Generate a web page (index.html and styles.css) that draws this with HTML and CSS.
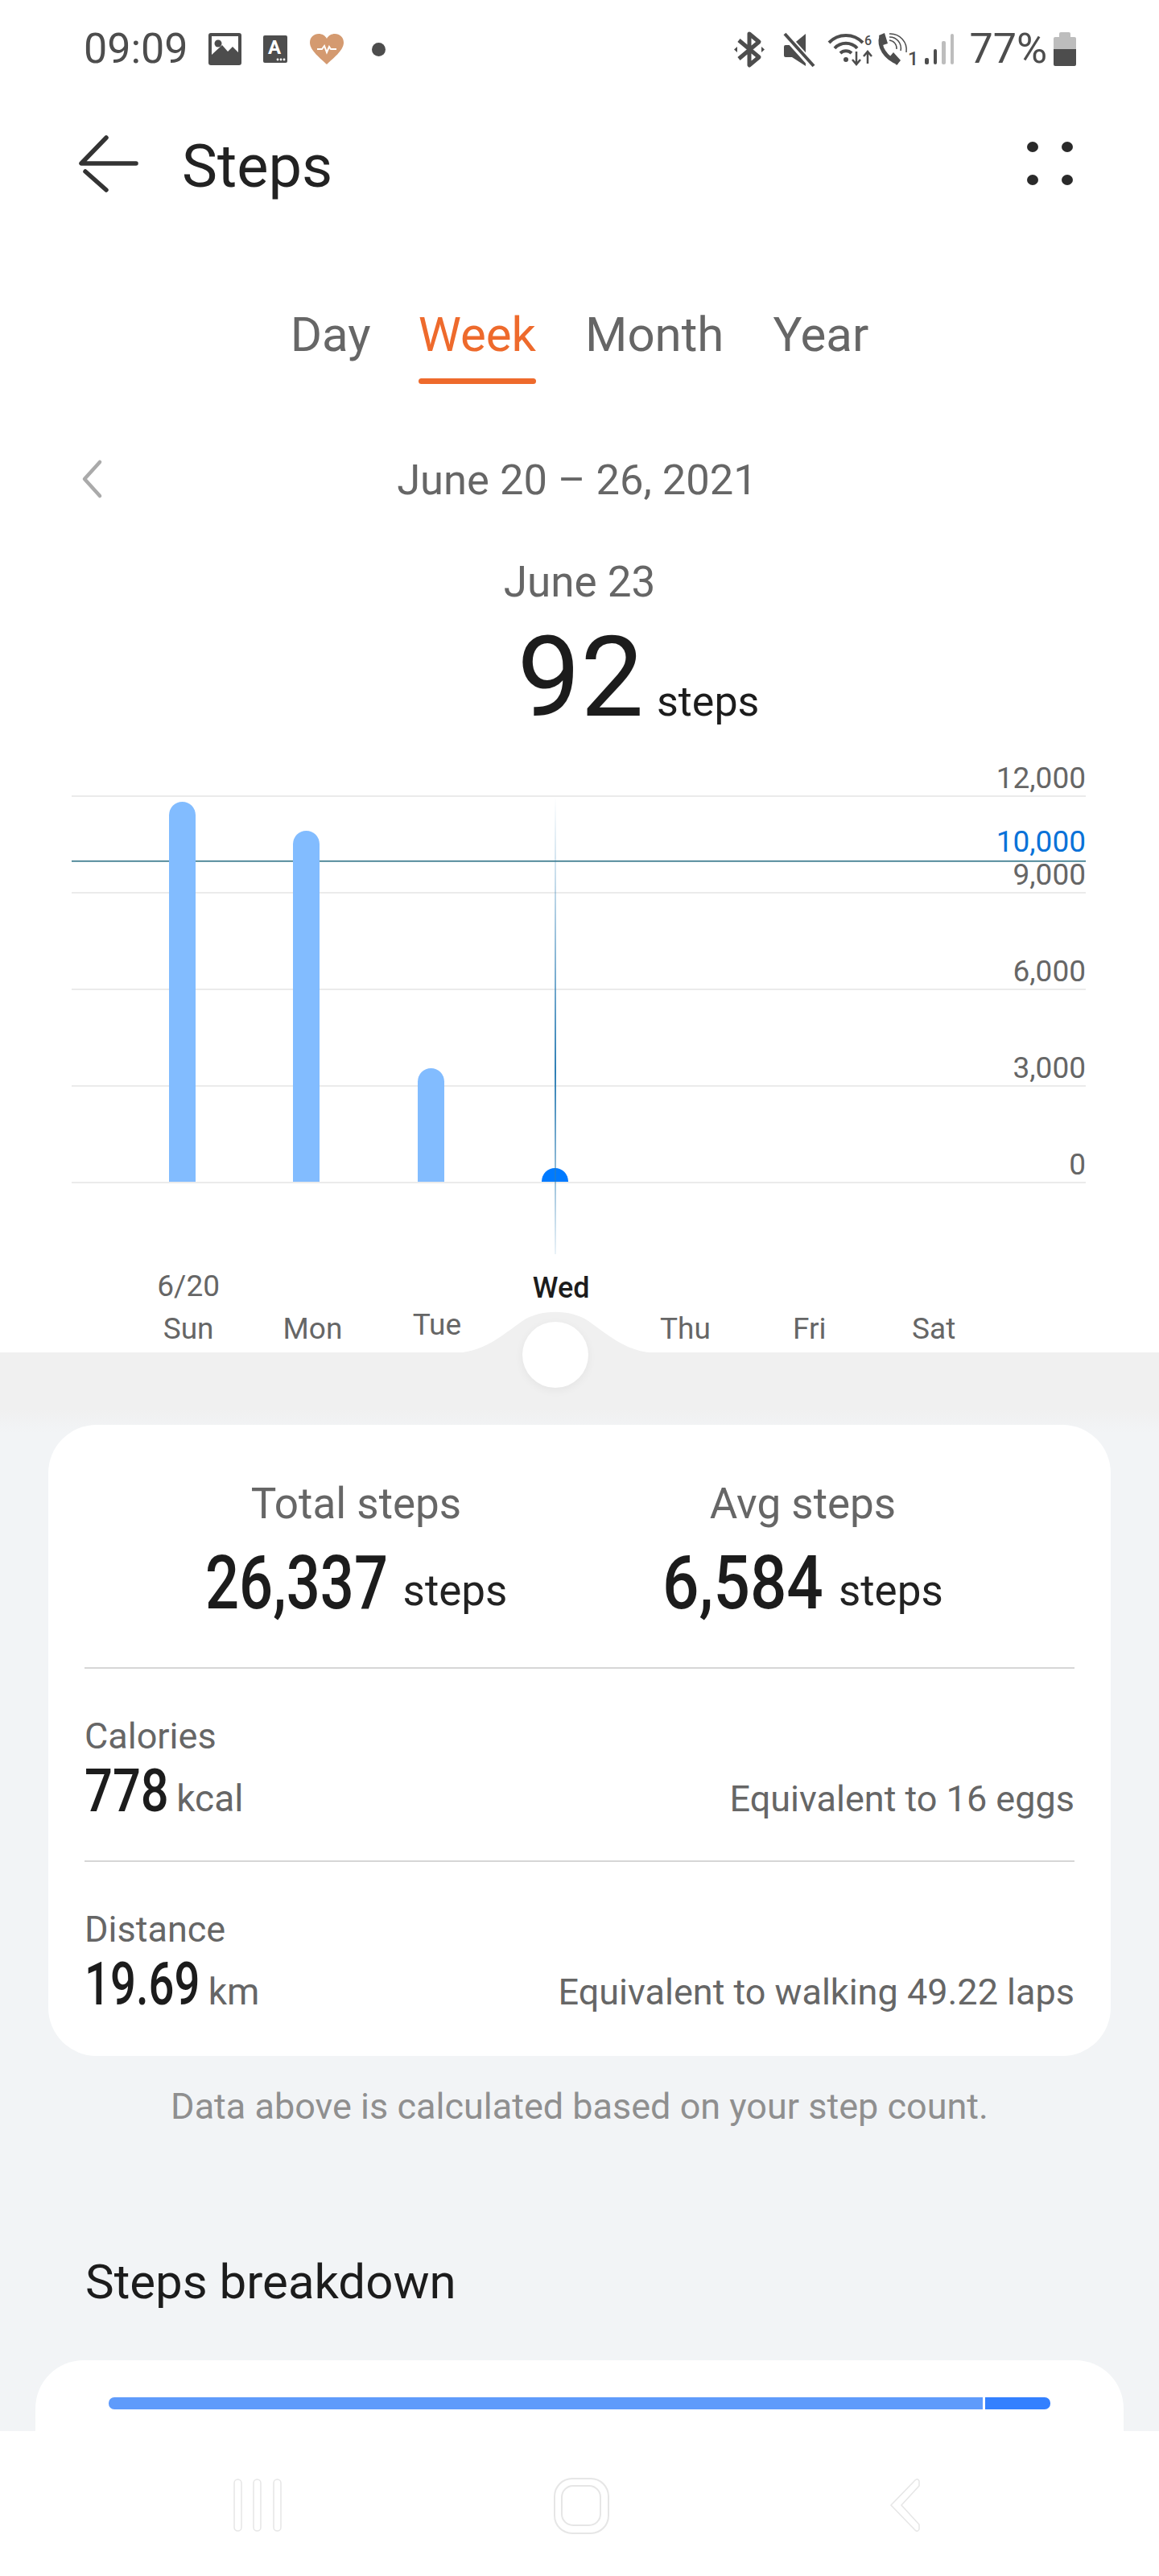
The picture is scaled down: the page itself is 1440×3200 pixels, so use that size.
FILE: index.html
```html
<!DOCTYPE html>
<html lang="en">
<head>
<meta charset="utf-8">
<title>Steps</title>
<link rel="stylesheet" href="styles.css">
</head>
<body>
<div class="phone">
  <div class="status">
    <div class="status-left">
      <span class="clock">09:09</span>
      <svg class="ico-img" width="41" height="40" viewBox="0 0 41 40"><rect width="41" height="40" rx="3" fill="#4d4d4d"/><path d="M4 4H37V24L30 17L24 23L17 15L4 27Z" fill="#fff"/><circle cx="12" cy="13" r="4.5" fill="#4d4d4d"/></svg>
      <svg class="ico-a" width="30" height="34" viewBox="0 0 30 34"><rect width="30" height="34" rx="2" fill="#4d4d4d"/><text x="14" y="23" class="ico-a-text">A</text><circle cx="18" cy="30" r="1.4" fill="#fff"/><circle cx="22" cy="30" r="1.4" fill="#fff"/><circle cx="26" cy="30" r="1.4" fill="#fff"/></svg>
      <svg class="ico-heart" width="42" height="38" viewBox="0 0 42 38"><path d="M21 38C14 31 0 21 0 11C0 4 5 0 11 0C15 0 19 2 21 6C23 2 27 0 31 0C37 0 42 4 42 11C42 21 28 31 21 38Z" fill="#d49a70"/><path d="M9 19H15L18 15L21 23L24 16L26 19H33" fill="none" stroke="#fff" stroke-width="2"/></svg>
      <span class="ico-dot"></span>
    </div>
    <div class="status-right">
      <svg class="ico-bt" width="38" height="43" viewBox="0 0 38 43"><path d="M6 10L31 31L19 41V2L31 12L6 33" fill="none" stroke="#4d4d4d" stroke-width="5" stroke-linejoin="round"/><path d="M0 21.500L4 18V25ZM38 21.500L34 18V25Z" fill="#4d4d4d"/></svg>
      <svg class="ico-mute" width="38" height="41" viewBox="0 0 38 41"><path d="M0 17Q0 15 2 15H10L27 1V41L10 30H2Q0 30 0 28Z" fill="#4d4d4d"/><path d="M1 2L37 42" stroke="#fff" stroke-width="9"/><path d="M1 1L37 41" stroke="#4d4d4d" stroke-width="4"/></svg>
      <svg class="ico-wifi" width="54" height="41" viewBox="0 0 54 41"><g fill="none" stroke="#4d4d4d" stroke-width="4"><path d="M1 12A29 29 0 0 1 43 12"/><path d="M8 19A19 19 0 0 1 36 19"/><path d="M15 25A10 10 0 0 1 29 25"/><path d="M35 23V38M30 33L35 39L40 33M49 38V24M44 29L49 23L54 29" stroke-width="2.500"/></g><circle cx="22" cy="33" r="3" fill="#4d4d4d"/><text x="45" y="15" class="ico-small">6</text></svg>
      <svg class="ico-call" width="48" height="41" viewBox="0 0 48 41"><path d="M5 4C1 17 10 31 26 37" fill="none" stroke="#4d4d4d" stroke-width="5"/><path d="M2 3L9 0L13 13L7 15ZM15 30L20 24L29 34L24 40Z" fill="#4d4d4d"/><g fill="none" stroke="#4d4d4d" stroke-width="1.500"><path d="M15 9A10 10 0 0 1 24 20"/><path d="M15 5A14 14 0 0 1 29 22"/><path d="M15 1A20 20 0 0 1 36 24"/></g><text x="38" y="40" class="ico-one">1</text></svg>
      <div class="signal"><i class="sig s1"></i><i class="sig s2"></i><i class="sig s3"></i><i class="sig s4"></i></div>
      <span class="batt-text">77%</span>
      <svg class="ico-batt" width="28" height="42" viewBox="0 0 28 42"><path d="M7 2Q7 0 9 0H19Q21 0 21 2V6H26Q28 6 28 8V22H0V8Q0 6 2 6H7Z" fill="#bdbdbd"/><path d="M0 21H28V40Q28 42 26 42H2Q0 42 0 40Z" fill="#4d4d4d"/></svg>
    </div>
  </div>

  <div class="appbar">
    <svg class="back" width="76" height="70" viewBox="0 0 76 70"><g fill="none" stroke="#333" stroke-width="5.500" stroke-linecap="round" stroke-linejoin="round"><path d="M35 3L4 35H72"/><path d="M9 45L35 68"/></g></svg>
    <h1 class="title">Steps</h1>
    <div class="more"><i></i><i></i><i></i><i></i></div>
  </div>

  <div class="tabs">
    <span class="tab tab-first">Day</span>
    <span class="tab active">Week</span>
    <span class="tab">Month</span>
    <span class="tab">Year</span>
  </div>

  <div class="range">
    <svg class="prev" width="26" height="48" viewBox="0 0 26 48"><path d="M23 3L4 24L23 45" fill="none" stroke="#aaa" stroke-width="4.500" stroke-linecap="round" stroke-linejoin="round"/></svg>
    <span>June 20 – 26, 2021</span>
  </div>
  <div class="day-label">June 23</div>
  <div class="day-value"><span class="big">92</span><span class="big-unit">steps</span></div>

  <div class="chart">
    <div class="row row-top"><span>12,000</span></div>
    <div class="row"><span>9,000</span></div>
    <div class="row"><span>6,000</span></div>
    <div class="row"><span>3,000</span></div>
    <div class="row"><span>0</span></div>
    <div class="goal"><span>10,000</span></div>
    <div class="bars">
      <i class="bar" style="height:472px"></i>
      <i class="bar" style="height:436px"></i>
      <i class="bar" style="height:141px"></i>
      <i class="bar now" style="height:17px"></i>
    </div>
    <div class="cursor"></div>
  </div>

  <div class="days">
    <div class="d"><span>6/20</span><span>Sun</span></div>
    <div class="d"><span>Mon</span></div>
    <div class="d d-tue"><span>Tue</span></div>
    <div class="d d-wed"><span>Wed</span></div>
    <div class="d"><span>Thu</span></div>
    <div class="d"><span>Fri</span></div>
    <div class="d"><span>Sat</span></div>
  </div>

  <div class="main">
    <svg class="hump" width="258" height="52" viewBox="0 0 258 52"><path d="M0 52C40 52 62 30 88 12C110 -3 148 -3 170 12C196 30 218 52 258 52Z" fill="#f0f0f0"/></svg>
    <div class="knob"></div>

    <div class="card">
      <div class="summary">
        <div class="sum-col">
          <div class="sum-label">Total steps</div>
          <div class="sum-value"><span class="num n-total">26,337</span><span class="sum-unit">steps</span></div>
        </div>
        <div class="sum-col">
          <div class="sum-label">Avg steps</div>
          <div class="sum-value"><span class="num n-avg">6,584</span><span class="sum-unit">steps</span></div>
        </div>
      </div>
      <div class="metric">
        <div class="metric-label">Calories</div>
        <div class="metric-line">
          <div class="metric-main"><span class="num num-sm n-cal">778</span><span class="metric-unit">kcal</span></div>
          <div class="metric-eq">Equivalent to 16 eggs</div>
        </div>
      </div>
      <div class="metric metric-last">
        <div class="metric-label">Distance</div>
        <div class="metric-line">
          <div class="metric-main"><span class="num num-sm n-dist">19.69</span><span class="metric-unit">km</span></div>
          <div class="metric-eq">Equivalent to walking 49.22 laps</div>
        </div>
      </div>
    </div>

    <p class="note">Data above is calculated based on your step count.</p>
    <h2 class="section">Steps breakdown</h2>

    <div class="card-2">
      <div class="split"><i class="seg-a"></i><i class="seg-b"></i></div>
    </div>
  </div>

  <div class="nav">
    <svg class="nav-ico" width="62" height="68" viewBox="0 0 62 68"><g fill="#fff" stroke="#e6e6e6" stroke-width="1.500"><rect x="1" y="2" width="9" height="64" rx="4.500"/><rect x="25" y="2" width="9" height="64" rx="4.500"/><rect x="50" y="2" width="9" height="64" rx="4.500"/></g></svg>
    <svg class="nav-ico" width="70" height="70" viewBox="0 0 70 70"><g fill="none" stroke="#e6e6e6" stroke-width="2"><rect x="1" y="1" width="67" height="68" rx="22"/><rect x="10" y="10" width="48" height="49" rx="14"/></g></svg>
    <svg class="nav-ico" width="40" height="68" viewBox="0 0 40 68"><path d="M32 3Q35 0 37 4V10L15 34L37 58V64Q35 68 32 65L2 34Z" fill="#fff" stroke="#e6e6e6" stroke-width="1.500"/></svg>
  </div>
</div>
</body>
</html>
```
FILE: styles.css
```css
* { box-sizing: border-box; }
html, body { margin: 0; padding: 0; background: #fff; }
body { font-family: Roboto, "Liberation Sans", sans-serif; color: #666; }
i { display: block; }
svg { overflow: visible; }

.phone { position: relative; width: 1440px; height: 3200px; overflow: hidden; background: #fff; display: flex; flex-direction: column; }

/* status bar */
.status { height: 122px; flex: none; display: flex; justify-content: space-between; align-items: center; padding: 0 103px 0 104px; color: #4d4d4d; }
.status-left, .status-right { display: flex; align-items: center; }
.clock, .batt-text { font-size: 52px; line-height: 60px; }
.ico-img { margin-left: 25px; }
.ico-a { margin-left: 27px; }
.ico-heart { margin-left: 28px; }
.ico-dot { width: 17px; height: 17px; margin-left: 35px; border-radius: 50%; background: #4d4d4d; }
.ico-a-text { font: 700 24px Roboto, sans-serif; fill: #fff; text-anchor: middle; }
.ico-small { font: 500 16px Roboto, sans-serif; fill: #4d4d4d; }
.ico-one { font: 500 23px Roboto, sans-serif; fill: #4d4d4d; }
.ico-mute { margin-left: 24px; }
.ico-wifi { margin-left: 17px; }
.ico-call { margin-left: 7px; }
.signal { margin-left: 11px; width: 36px; height: 38px; display: flex; justify-content: space-between; align-items: flex-end; }
.sig { width: 4.500px; border-radius: 2px; background: #4d4d4d; }
.s1 { height: 8px; }
.s2 { height: 19px; }
.s3 { height: 29px; background: #bdbdbd; }
.s4 { height: 38px; background: #bdbdbd; }
.batt-text { margin-left: 19px; }
.ico-batt { margin-left: 8px; }

/* app bar */
.appbar { height: 162px; flex: none; display: flex; align-items: center; padding: 0 107px 0 97px; }
.back { flex: none; }
.title { margin: 8px 0 0 53px; font-size: 74px; line-height: 90px; font-weight: 400; color: #222; flex: 1; }
.more { width: 57px; display: grid; grid-template-columns: 14px 14px; justify-content: space-between; row-gap: 28px; }
.more i { width: 14px; height: 13px; border-radius: 50%; background: #2a2a2a; }

/* tabs */
.tabs { flex: none; margin-top: 92px; display: flex; justify-content: center; gap: 61px; }
.tab { position: relative; font-size: 60px; line-height: 80px; height: 101px; color: #666; }
.tab-first { margin-right: -2px; }
.tab.active { color: #ee6a2c; }
.tab.active::after { content: ""; position: absolute; left: 0; right: 0; bottom: 0; height: 7px; border-radius: 4px; background: #ee6a2c; }

/* date */
.range { position: relative; flex: none; margin-top: 84px; height: 70px; line-height: 70px; font-size: 52.500px; text-align: center; padding-right: 6px; }
.prev { position: absolute; left: 101px; top: 10px; }
.day-label { flex: none; margin-top: 57px; height: 70px; line-height: 70px; font-size: 53px; text-align: center; }
.day-value { flex: none; height: 140px; display: flex; justify-content: center; align-items: baseline; gap: 16px; margin-top: 13px; padding-left: 146px; color: #1c1c1c; }
.big { font-size: 140px; line-height: 140px; }
.big-unit { font-size: 52px; }

/* chart */
.chart { position: relative; flex: none; margin: 19px 91px 0 89px; }
.row { height: 120px; display: flex; justify-content: flex-end; align-items: flex-end; padding-bottom: 3px; border-bottom: 2px solid #ebebeb; font-size: 37px; line-height: 36px; color: #666; }
.row-top { height: 60px; }
.goal { position: absolute; left: 0; right: 0; top: 139px; height: 1px; background: #246b80; box-shadow: 0 1px 0 rgba(36,107,128,.5); display: flex; justify-content: flex-end; align-items: flex-end; font-size: 37px; line-height: 36px; color: #0a72d8; }
.goal span { margin-bottom: 6px; }
.bars { position: absolute; left: 121px; bottom: 2px; display: flex; align-items: flex-end; gap: 121.330px; }
.bar { width: 33px; background: #82bcff; border-radius: 16.500px 16.500px 0 0; }
.bar.now { background: #007aff; }
.cursor { position: absolute; left: 600px; top: 60px; width: 2px; height: 568px; background: linear-gradient(to bottom, rgba(47,127,181,0) 0, rgba(47,127,181,.3) 20%, #2f7fb5 60%, rgba(47,127,181,.45) 85%, rgba(47,127,181,.1) 100%); }

/* day labels */
.days { flex: none; height: 210px; display: grid; grid-template-columns: repeat(7, 154.330px); padding: 0 0 5px 157px; align-items: end; }
.d { display: flex; flex-direction: column; align-items: center; font-size: 37px; line-height: 48px; color: #666; gap: 5px; }
.d-tue { padding-bottom: 5px; }
.d-wed { padding-bottom: 51px; color: #1c1c1c; font-weight: 500; font-size: 36px; }

/* lower section */
.main { position: relative; flex: 1; min-height: 0; padding-top: 90px; background: linear-gradient(to bottom, #f0f0f0 70px, #f2f4f6 100px); }
.hump { position: absolute; left: 561px; top: -51px; }
.knob { position: absolute; left: 649px; top: -38px; width: 82px; height: 82px; border-radius: 50%; background: #fff; box-shadow: 0 3px 12px rgba(0,0,0,.05); }

.card { margin: 0 60px; padding: 0 45px; background: #fff; border-radius: 60px; }
.summary { display: grid; grid-template-columns: 1fr 1fr; padding: 63px 60px 54px; border-bottom: 2px solid #d6d6d6; text-align: center; }
.sum-label { font-size: 53px; line-height: 70px; color: #666; }
.sum-value { margin-top: 14px; font-size: 92px; line-height: 100px; color: #1c1c1c; white-space: nowrap; }
.num { display: inline-block; transform-origin: left center; font-size: 92px; font-weight: 500; color: #1c1c1c; }
.n-total { transform: scaleX(.805); margin-right: -54px; }
.n-avg { transform: scaleX(.87); margin-right: -29px; }
.num-sm { font-size: 74px; }
.n-cal { transform: scaleX(.83); margin-right: -21px; }
.n-dist { transform: scaleX(.76); margin-right: -44px; }
.sum-unit { margin-left: 18px; font-size: 53px; line-height: 1; color: #222; vertical-align: 4px; }

.metric { padding: 54px 0 46px; border-bottom: 2px solid #d6d6d6; }
.metric-last { border-bottom: 0; padding: 54px 0 49px; }
.metric-label { font-size: 45px; line-height: 60px; color: #666; }
.metric-line { margin-top: -2px; display: flex; justify-content: space-between; align-items: baseline; line-height: 80px; }
.metric-main { font-size: 74px; line-height: 80px; }
.metric-unit { margin-left: 9px; font-size: 46px; line-height: 1; color: #666; }
.metric-eq { font-size: 45px; line-height: 60px; color: #666; }

.note { margin: 33px 0 0; font-size: 45px; line-height: 60px; text-align: center; color: #8f8f8f; }
.section { margin: 153px 0 0; padding-left: 106px; font-size: 60px; line-height: 70px; font-weight: 400; color: #1c1c1c; }

.card-2 { margin: 62px 44px 0; padding: 46px 91px; height: 240px; background: #fff; border-radius: 60px; }
.split { display: flex; gap: 3px; height: 15px; border-radius: 7px; overflow: hidden; }
.seg-a { width: 1086px; background: #5f9bfb; }
.seg-b { flex: 1; background: #3380ff; }

/* navigation */
.nav { position: absolute; left: 0; right: 0; bottom: 0; height: 180px; padding: 58px 0 0 290px; background: #fff; display: grid; grid-template-columns: 398px 417px 40px; align-items: start; }
```
